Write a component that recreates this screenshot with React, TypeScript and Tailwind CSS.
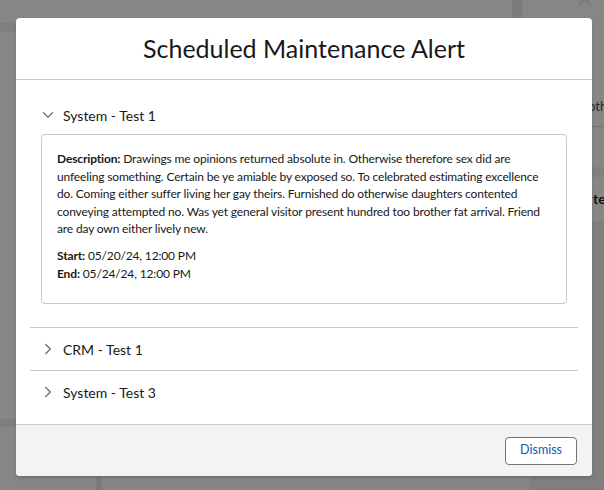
import { FC } from 'react';

const Chevron: FC<{ open?: boolean }> = ({ open }) => (
  <svg
    viewBox="0 0 12 12"
    className={`w-3 h-3 shrink-0 ${open ? '' : '-rotate-90'}`}
    fill="none"
    stroke="#747474"
    strokeWidth="1.4"
    strokeLinecap="round"
    strokeLinejoin="round"
  >
    <path d="M1.5 3.8 6 8.3l4.5-4.5" />
  </svg>
);

interface SectionProps {
  title: string;
  open?: boolean;
  children?: React.ReactNode;
}

const Section: FC<SectionProps> = ({ title, open, children }) => (
  <div className="border-b border-[#c9c9c9] last:border-b-0">
    <div className={`flex items-center gap-[9px] pl-[12px] ${open ? 'h-[38px]' : 'h-[42px]'}`}>
      <Chevron open={open} />
      <span className="text-[14px] text-[#181818]">{title}</span>
    </div>
    {open && <div className="px-[11px] pb-[23px]">{children}</div>}
  </div>
);

// the dimmed page that sits behind the dialog
const Backdrop: FC = () => (
  <div className="absolute inset-0 flex bg-[#f3f3f3]">
    <div className="w-[16px] flex flex-col">
      <div className="h-[23px]" />
      <div className="h-[9px] bg-[#e5e5e5]" />
      <div className="flex-1" />
      <div className="h-[8px] bg-[#e5e5e5]" />
      <div className="h-[63px]" />
    </div>
    <div className="flex-1 flex flex-col">
      <div className="h-[18px] flex">
        <div className="w-[496px]" />
        <div className="w-[10px] bg-[#e0e0e0]" />
      </div>
      <div className="flex-1" />
      <div className="h-[14px] flex">
        <div className="w-[80px]" />
        <div className="w-[6px] bg-[#e0e0e0]" />
        <div className="flex-1" />
        <div className="w-[62px] bg-[#e6e6e6]" />
      </div>
    </div>
    <div className="w-[12px] flex flex-col text-[#444] overflow-hidden">
      <div className="h-[97px]" />
      <span className="text-[13px] leading-[18px] -ml-[4px] whitespace-nowrap">oth</span>
      <div className="h-[12px] border-b border-[#d0d0d0]" />
      <div className="h-[40px]" />
      <div className="h-[10px] bg-[#e8e8e8]" />
      <span className="text-[14px] leading-[44px] font-bold text-[#181818] ml-px">te</span>
      <div className="flex-1 bg-[#e6e6e6]" />
    </div>
  </div>
);

export default function App() {
  return (
    <div
      className="relative w-[604px] h-[490px] overflow-hidden bg-white"
      style={{ fontFamily: 'Lato, "Noto Sans", sans-serif' }}
    >
      <Backdrop />
      <div className="absolute inset-0 bg-[rgba(8,7,7,0.46)]" />
      <svg viewBox="0 0 14 14" className="absolute left-[578px] top-[-8px] w-[14px] h-[14px]" stroke="#777" strokeWidth="1.6" fill="none">
        <path d="M1 1l12 12M13 1 1 13" />
      </svg>

      {/* dialog */}
      <div className="absolute left-[16px] top-[18px] w-[576px] h-[458px] flex flex-col bg-white rounded-[4px] shadow-[0_2px_3px_rgba(0,0,0,0.16)] overflow-hidden">
        <header className="h-[62px] shrink-0 flex items-center justify-center border-b border-[#c9c9c9]">
          <h1 className="text-[25px] leading-none text-[#181818]">Scheduled Maintenance Alert</h1>
        </header>
        <div className="flex-1 px-[14px] pt-[16px]">
          <Section title="System - Test 1" open>
            <div className="border border-[#c9c9c9] rounded-[4px] pl-[15px] pr-[12px] pt-[15px] pb-[21px] text-[12px] leading-[17.5px] tracking-[-0.15px] text-[#181818]">
              <p>
                <span className="font-bold">Description:</span> Drawings me opinions returned absolute in. Otherwise therefore sex did are unfeeling something. Certain be ye amiable by exposed so. To celebrated estimating excellence do. Coming either suffer living her gay theirs. Furnished do otherwise daughters contented conveying attempted no. Was yet general visitor present hundred too brother fat arrival. Friend are day own either lively new.
              </p>
              <p className="mt-[9.5px]">
                <span className="font-bold">Start:</span> 05/20/24, 12:00 PM
              </p>
              <p>
                <span className="font-bold">End:</span> 05/24/24, 12:00 PM
              </p>
            </div>
          </Section>
          <Section title="CRM - Test 1" />
          <Section title="System - Test 3" />
        </div>
        <footer className="h-[52px] shrink-0 flex items-center justify-end px-[15px] bg-[#f3f3f3] border-t border-[#c9c9c9]">
          <button className="h-[28px] px-[14px] rounded-[4px] border border-[#747474] bg-white text-[12.5px] text-[#0b5cab]">
            Dismiss
          </button>
        </footer>
      </div>
    </div>
  );
}
